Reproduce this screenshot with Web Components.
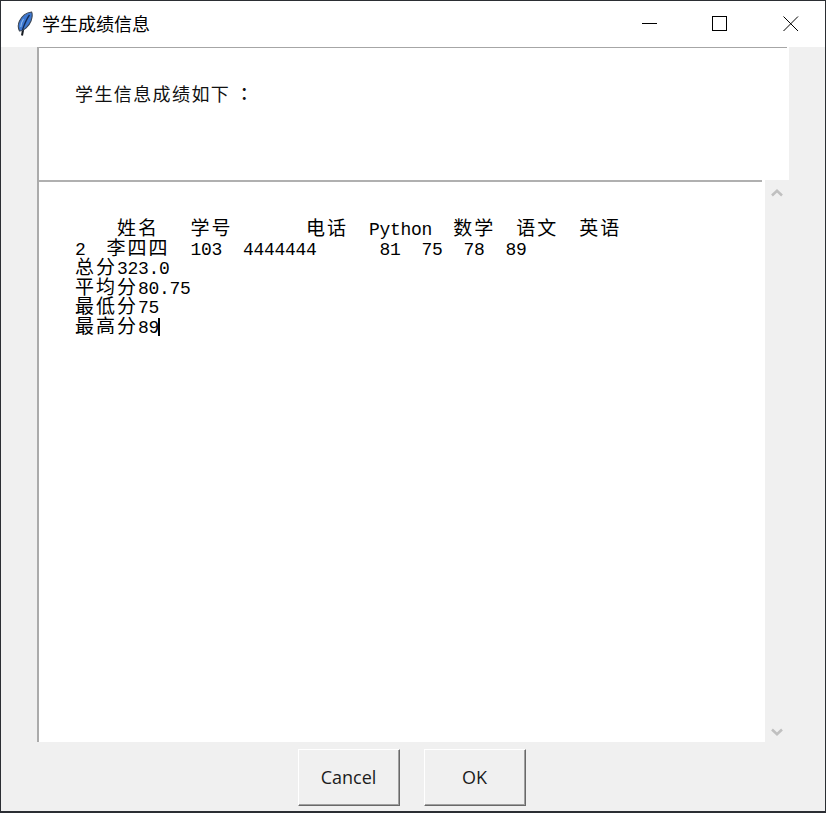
<!DOCTYPE html>
<html>
<head>
<meta charset="utf-8">
<title>学生成绩信息</title>
<style>
  html, body { margin: 0; padding: 0; background: #f0f0f0; }
</style>
</head>
<body>
<student-window>
  <title-bar slot="title">学生成绩信息</title-bar>
  <label-panel slot="label">学生信息成绩如下<span style="font-family: 'Noto Sans CJK TC', sans-serif; font-weight: 500; margin-left: 5px">：</span></label-panel>
  <text-view slot="text">
    <text-line>    姓名   学号       电话  Python  数学  语文  英语</text-line>
    <text-line>2  李四四  103  4444444      81  75  78  89</text-line>
    <text-line>总分323.0</text-line>
    <text-line>平均分80.75</text-line>
    <text-line>最低分75</text-line>
    <text-line caret>最高分89</text-line>
  </text-view>
  <v-scrollbar slot="scroll"></v-scrollbar>
  <tk-button slot="buttons">Cancel</tk-button>
  <tk-button slot="buttons">OK</tk-button>
</student-window>

<script>
// Outer window frame
class StudentWindow extends HTMLElement {
  constructor() {
    super();
    this.attachShadow({ mode: 'open' });
  }

  connectedCallback() {
    this.shadowRoot.innerHTML = `
      <style>
        :host {
          display: flex;
          flex-direction: column;
          box-sizing: border-box;
          width: 826px;
          height: 813px;
          background: #f0f0f0;
          border: 1px solid #2b2e33;
          border-bottom-width: 2px;
          overflow: hidden;
        }
        .main {
          display: flex;
          flex-direction: column;
          flex: 1;
          min-height: 0;
          padding-left: 36px;
        }
        .text-row {
          display: flex;
          flex: 1;
          min-height: 0;
        }
        .buttons {
          display: flex;
          justify-content: center;
          gap: 24px;
          height: 68px;
          padding-top: 6px;
          box-sizing: border-box;
          padding-right: 3px;
        }
      </style>
      <slot name="title"></slot>
      <div class="main">
        <slot name="label"></slot>
        <div class="text-row">
          <slot name="text"></slot>
          <slot name="scroll"></slot>
        </div>
      </div>
      <div class="buttons"><slot name="buttons"></slot></div>
    `;
  }
}

class TitleBar extends HTMLElement {
  constructor() {
    super();
    this.attachShadow({ mode: 'open' });
  }

  connectedCallback() {
    this.shadowRoot.innerHTML = `
      <style>
        :host {
          display: flex;
          align-items: center;
          flex: none;
          height: 46px;
          background: #fff;
          color: #000;
          font: 18px/24px "Noto Sans CJK SC", sans-serif;
        }
        .icon { flex: none; margin: 0 8px 0 15px; width: 18px; height: 26px; }
        .caption { flex: 1; padding-bottom: 3px; }
        .ctl {
          flex: none;
          width: 70px;
          height: 46px;
          display: flex;
          align-items: center;
          justify-content: center;
        }
        .ctl svg { width: 16px; height: 16px; }
        .ctl.close svg { margin-left: 1px; }
      </style>
      <svg class="icon" viewBox="0 0 18 26">
        <path d="M6 24.5 L7.2 18" fill="none" stroke="#15191f" stroke-width="2"/>
        <path d="M15.6 1 C11 1.5 6 5 3.5 10 C2 13 2 17 3.5 20 C8 20 13 15 15 10 C16.2 6.5 16.6 3 15.6 1 Z" fill="#3d78d2" stroke="#3c4654" stroke-width="1.1"/>
        <path d="M13.5 4 C10.5 8 8.5 13 6.4 19" fill="none" stroke="#142c55" stroke-width="1.3"/>
        <path d="M7.5 8 C5.8 10.5 5 13 4.8 16" fill="none" stroke="#8db6ea" stroke-width="1.1"/>
      </svg>
      <div class="caption"><slot></slot></div>
      <div class="ctl"><svg viewBox="0 0 16 16" shape-rendering="crispEdges"><path d="M0 7.5H15" stroke="#000" fill="none"/></svg></div>
      <div class="ctl"><svg viewBox="0 0 16 16" shape-rendering="crispEdges"><rect x="0.5" y="0.5" width="14" height="14" stroke="#000" fill="none"/></svg></div>
      <div class="ctl close"><svg viewBox="0 0 16 16"><path d="M0.5 0.5L15 15M15 0.5L0.5 15" stroke="#000" stroke-width="1" fill="none"/></svg></div>
    `;
  }
}

// Read-only label area above the text box
class LabelPanel extends HTMLElement {
  constructor() {
    super();
    this.attachShadow({ mode: 'open' });
  }

  connectedCallback() {
    this.shadowRoot.innerHTML = `
      <style>
        :host {
          display: block;
          flex: none;
          box-sizing: border-box;
          width: 752px;
          height: 133px;
          background: #fff;
          border-left: 2px solid #ababab;
        }
        .rule { height: 1px; background: #a6a6a6; margin-right: 2px; }
        .text {
          padding: 33px 0 0 36px;
          font: 18px/24px "Noto Sans CJK SC", sans-serif;
          letter-spacing: 1.4px;
          color: #111;
        }
      </style>
      <div class="rule"></div>
      <div class="text"><slot></slot></div>
    `;
  }
}

class TextView extends HTMLElement {
  constructor() {
    super();
    this.attachShadow({ mode: 'open' });
  }

  connectedCallback() {
    this.shadowRoot.innerHTML = `
      <style>
        :host {
          display: block;
          flex: none;
          box-sizing: border-box;
          width: 728px;
          height: 562px;
          background: #fff;
          border-left: 2px solid #ababab;
        }
        .rule { height: 2px; background: #b0b0b0; margin-right: 3px; }
        .body { padding: 35px 0 0 36px; }
      </style>
      <div class="rule"></div>
      <div class="body"><slot></slot></div>
    `;
  }
}

// One line of the text box: half-width latin and full-width CJK on a 10.5px cell
class TextLine extends HTMLElement {
  constructor() {
    super();
    this.attachShadow({ mode: 'open' });
  }

  connectedCallback() {
    const text = this.textContent;
    const runs = text.split(/([\u4e00-\u9fff]+)/).map((run, i) =>
      i % 2 ? `<span class="cjk">${run}</span>` : `<span class="lat">${run}</span>`
    ).join('');
    const caret = this.hasAttribute('caret') ? '<span class="caret"></span>' : '';

    this.shadowRoot.innerHTML = `
      <style>
        :host {
          display: block;
          height: 19.6px;
          color: #000;
        }
        .line { line-height: 19.6px; white-space: pre; }
        .lat {
          font-family: "Liberation Mono", monospace;
          font-size: 18px;
          letter-spacing: -0.3px;
        }
        .cjk {
          font-family: "Noto Sans CJK SC", sans-serif;
          font-size: 19px;
          letter-spacing: 2px;
        }
        .caret {
          display: inline-block;
          width: 2px;
          height: 18px;
          margin-left: -1px;
          background: #000;
          vertical-align: -3px;
        }
      </style>
      <div class="line">${runs}${caret}</div>
    `;
  }
}

class VScrollbar extends HTMLElement {
  constructor() {
    super();
    this.attachShadow({ mode: 'open' });
  }

  connectedCallback() {
    this.shadowRoot.innerHTML = `
      <style>
        :host {
          display: flex;
          flex: none;
          flex-direction: column;
          justify-content: space-between;
          align-items: center;
          box-sizing: border-box;
          width: 24px;
          height: 562px;
          padding: 9px 0 6px;
        }
        svg { width: 12px; height: 8px; display: block; }
      </style>
      <svg viewBox="0 0 12 8"><path d="M1 6.5L6 1.8L11 6.5" fill="none" stroke="#c0c0c0" stroke-width="2.6"/></svg>
      <svg viewBox="0 0 12 8"><path d="M1 1.5L6 6.2L11 1.5" fill="none" stroke="#c0c0c0" stroke-width="2.6"/></svg>
    `;
  }
}

class TkButton extends HTMLElement {
  constructor() {
    super();
    this.attachShadow({ mode: 'open' });
  }

  connectedCallback() {
    this.shadowRoot.innerHTML = `
      <style>
        :host {
          display: flex;
          align-items: center;
          justify-content: center;
          box-sizing: border-box;
          width: 102px;
          height: 57px;
          padding-bottom: 1px;
          background: #f0f0f0;
          color: #1c1c1c;
          font: 18px "Open Sans", sans-serif;
          border: 1px solid;
          border-color: #fff #696969 #696969 #fff;
          box-shadow: inset -1px -1px 0 #a0a0a0;
        }
      </style>
      <slot></slot>
    `;
  }
}

customElements.define('student-window', StudentWindow);
customElements.define('title-bar', TitleBar);
customElements.define('label-panel', LabelPanel);
customElements.define('text-view', TextView);
customElements.define('text-line', TextLine);
customElements.define('v-scrollbar', VScrollbar);
customElements.define('tk-button', TkButton);
</script>
</body>
</html>
